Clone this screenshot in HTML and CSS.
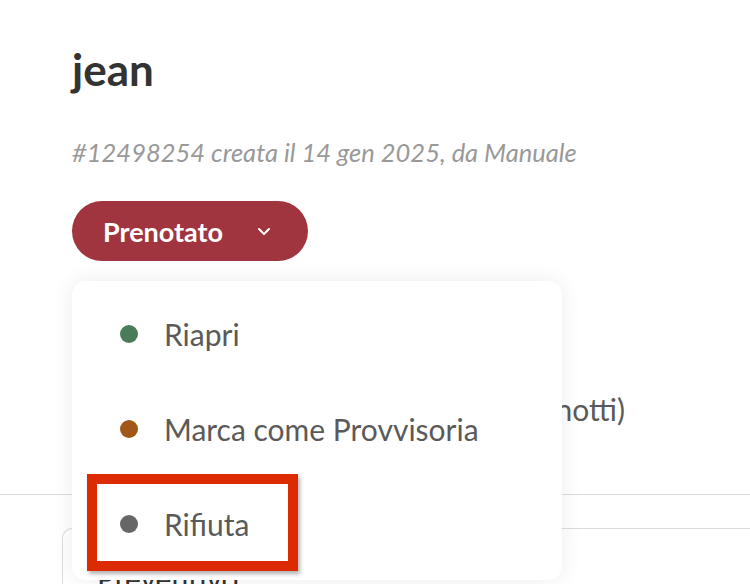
FILE: index.html
```html
<!DOCTYPE html>
<html lang="it">
<head>
<meta charset="utf-8">
<title>jean</title>
<link rel="stylesheet" href="styles.css">
</head>
<body>
<main class="page">
  <header class="head">
    <h1 class="title">jean</h1>
    <p class="meta">#12498254 creata il 14 gen 2025, da Manuale</p>
    <div class="status">
      <button class="status-btn" type="button">
        <span>Prenotato</span>
        <svg class="chev" width="14" height="9" viewBox="0 0 14 9" aria-hidden="true"><path d="M2 2l5 5 5-5" fill="none" stroke="#fff" stroke-width="2" stroke-linecap="round" stroke-linejoin="round"/></svg>
      </button>
      <ul class="menu">
        <li class="menu-item"><span class="dot dot-green"></span>Riapri</li>
        <li class="menu-item"><span class="dot dot-orange"></span>Marca come Provvisoria</li>
        <li class="menu-item"><span class="dot dot-gray"></span>Rifiuta</li>
        <li class="highlight" aria-hidden="true"></li>
      </ul>
    </div>
  </header>
  <section class="details">
    <p class="stay">14 gen 2025 – 16 gen 2025 (2 notti)</p>
  </section>
  <hr class="rule">
  <section class="card">
    <h2 class="card-title">Preventivo</h2>
  </section>
</main>
</body>
</html>
```
FILE: styles.css
```css
html, body {
  margin: 0;
  padding: 0;
  height: 100%;
  overflow: hidden;
}
body {
  background: #fff;
  font-family: "Lato", "Open Sans", sans-serif;
  color: #333;
}
.page {
  padding-top: 43px;
}
.head {
  padding-left: 72px;
}
.title {
  margin: 0;
  font-size: 44px;
  line-height: 52px;
  font-weight: 700;
  color: #333;
}
.meta {
  margin: 42px 0 0;
  font-size: 25.5px;
  line-height: 30px;
  font-style: italic;
  color: #999;
}
.status {
  position: relative;
  margin-top: 34px;
}
.status-btn {
  display: flex;
  align-items: center;
  width: 236px;
  height: 60px;
  padding: 0 0 0 31px;
  border: 0;
  border-radius: 30px;
  background: #a0353f;
  color: #fff;
  font-family: inherit;
  font-size: 27px;
  font-weight: 700;
}
.chev {
  margin-left: 34px;
}
.menu {
  position: absolute;
  left: 0;
  top: 80px;
  z-index: 2;
  width: 490px;
  height: 299px;
  box-sizing: border-box;
  margin: 0;
  padding: 5px 0 0;
  list-style: none;
  background: #fff;
  border-radius: 14px;
  box-shadow: 0 0 22px rgba(0, 0, 0, 0.08);
}
.menu-item {
  display: flex;
  align-items: center;
  height: 95px;
  padding-left: 48px;
  font-size: 30px;
  color: #5a5a5a;
}
.dot {
  width: 18px;
  height: 18px;
  border-radius: 50%;
  margin-right: 26px;
  flex: none;
}
.dot-green { background: #4a7c59; }
.dot-orange { background: #a05718; }
.dot-gray { background: #666; }
.highlight {
  position: absolute;
  left: 15px;
  top: 193px;
  width: 211px;
  height: 97px;
  box-sizing: border-box;
  border: 10px solid #dc2b03;
  box-shadow: 2px 3px 4px rgba(0, 0, 0, 0.3);
}
.details {
  padding: 130px 0 0 72px;
}
.stay {
  margin: 0;
  width: 553px;
  text-align: right;
  font-size: 30px;
  line-height: 36px;
  color: #5a5a5a;
}
.rule {
  margin: 67px 0 0;
  border: 0;
  border-top: 1px solid #dcdcdc;
}
.card {
  margin: 33px 0 0 62px;
  border: 1px solid #dcdcdc;
  border-right: 0;
  border-radius: 10px 0 0 0;
  background: #fff;
  padding: 31px 0 0 34px;
  height: 200px;
}
.card-title {
  margin: 0;
  font-size: 30px;
  line-height: 36px;
  font-weight: 400;
  color: #333;
}
```
